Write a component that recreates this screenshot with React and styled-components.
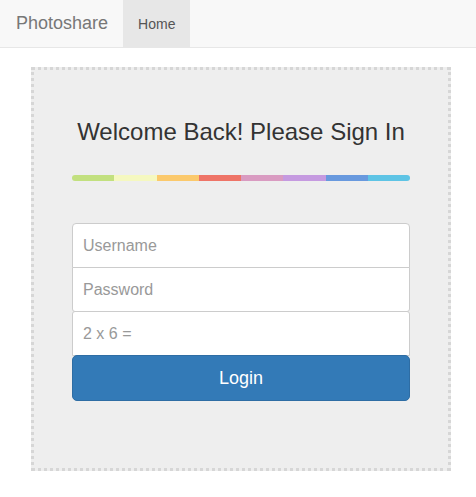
import styled, { createGlobalStyle } from "styled-components";

const GlobalStyle = createGlobalStyle`
  html, body {
    margin: 0;
    padding: 0;
    background: #fff;
    font-family: "Liberation Sans", Arial, sans-serif;
    font-size: 14px;
    color: #333;
  }
  * { box-sizing: border-box; }
`;

const Navbar = styled.nav`
  display: flex;
  align-items: stretch;
  height: 48px;
  background: #f8f8f8;
  border-bottom: 1px solid #e7e7e7;
  padding-left: 1px;
`;

const Brand = styled.a`
  display: flex;
  align-items: center;
  padding: 0 15px;
  font-size: 18px;
  color: #777;
  text-decoration: none;
`;

const NavItem = styled.a`
  display: flex;
  align-items: center;
  padding: 0 15px;
  font-size: 14px;
  color: #555;
  text-decoration: none;
  background: ${(p) => (p.$active ? "#e7e7e7" : "transparent")};
`;

const Card = styled.div`
  width: 420px;
  margin: 19px 0 0 31px;
  background: #eee;
  border: 3px dotted #d6d6d6;
  padding: 47px 38px 67px;
`;

const Title = styled.h3`
  margin: 0;
  text-align: center;
  font-size: 24px;
  font-weight: 400;
  line-height: 30px;
  color: #333;
`;

const Rainbow = styled.div`
  display: flex;
  height: 6px;
  margin: 28px 0 42px;
  border-radius: 3px;
  overflow: hidden;
`;

const Stripe = styled.span`
  flex: 1;
  background: ${(p) => p.$color};
`;

const Form = styled.form`
  display: flex;
  flex-direction: column;
`;

const Input = styled.input`
  height: 45px;
  padding: 0 10px;
  font-family: inherit;
  font-size: 16px;
  color: #555;
  background: #fff;
  border: 1px solid #ccc;
  border-radius: ${(p) => p.$radius || "0"};
  margin-top: ${(p) => (p.$first ? "0" : "-1px")};
  outline: none;
  &::placeholder { color: #999; }
`;

const Button = styled.button`
  height: 46px;
  margin-top: -1px;
  font-family: inherit;
  font-size: 18px;
  color: #fff;
  background: #337ab7;
  border: 1px solid #2e6da4;
  border-radius: 5px;
  cursor: pointer;
`;

const colors = [
  "#c2e07f",
  "#f5f8c0",
  "#fbc96c",
  "#ee7467",
  "#d99bc1",
  "#c59ae0",
  "#6899de",
  "#5ec4e5",
];

export default function App() {
  return (
    <>
      <GlobalStyle />
      <Navbar>
        <Brand href="#">Photoshare</Brand>
        <NavItem href="#" $active>
          Home
        </NavItem>
      </Navbar>
      <Card>
        <Title>Welcome Back! Please Sign In</Title>
        <Rainbow>
          {colors.map((c) => (
            <Stripe key={c} $color={c} />
          ))}
        </Rainbow>
        <Form onSubmit={(e) => e.preventDefault()}>
          <Input $first $radius="4px 4px 0 0" placeholder="Username" />
          <Input type="password" placeholder="Password" $radius="0 0 3px 3px" />
          <Input placeholder="2 x 6 =" $radius="3px 3px 0 0" />
          <Button type="submit">Login</Button>
        </Form>
      </Card>
    </>
  );
}
